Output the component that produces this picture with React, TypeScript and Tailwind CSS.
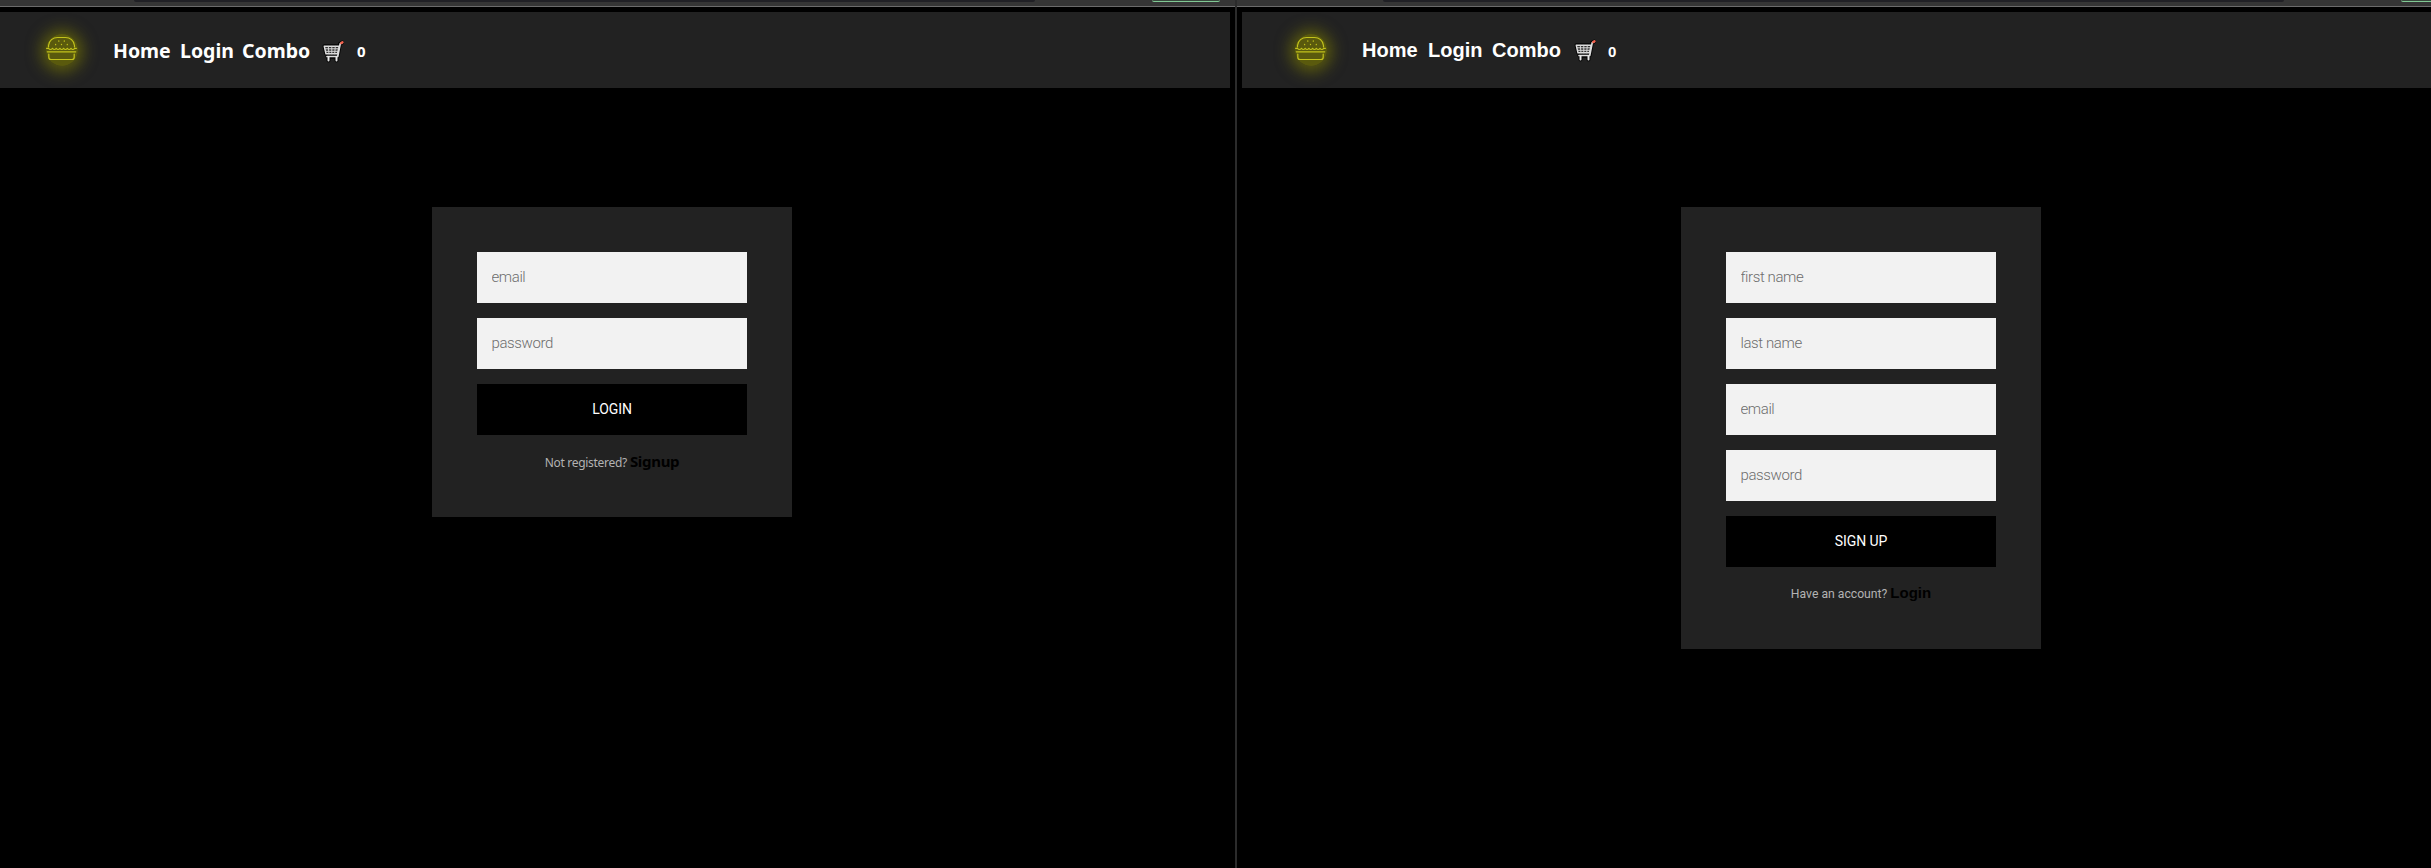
import React from "react";

function Burger() {
  return (
    <svg width="32" height="26" viewBox="0 0 32 26" fill="none" stroke="#c2c21c" strokeWidth="1.2" strokeLinecap="round" strokeLinejoin="round">
      <path d="M2.500 11V9.500C3 4.500 7 1.500 11.500 1.500h8c4.500 0 8.500 3 9 8V11" />
      <path d="M.6 12.300h1.900q2 2.400 4 0q1.850 2.400 3.700 0q1.850 2.400 3.700 0q1.850 2.400 3.700 0q1.850 2.400 3.700 0q1.850 2.400 3.700 0q1.850 2.400 3.700 0h1.700" />
      <path d="M1.300 15.800h28.400" strokeWidth="1.300" />
      <path d="M2.800 18v3.200c0 1.600.8 2.300 2.300 2.300h20.800c1.500 0 2.300-.7 2.300-2.300V18" />
      <path d="M12.800 5v.2M18.300 5v.2M9.600 8.500v.2M15.500 8.300v.2M21.300 8.500v.2" strokeWidth="1.300" />
    </svg>
  );
}

function Cart() {
  return (
    <svg width="24" height="24" viewBox="0 0 24 24" fill="none" strokeLinecap="round" strokeLinejoin="round">
      <g stroke="#050505" strokeWidth="4">
        <path d="M2.500 7.300h14.500l-1.500 7.400H4.300zM20 3.700l-2 1-2.500 13H5.500M6.500 18v3.500M14.500 18v3.500" />
      </g>
      <path d="M2.300 7.300h14.900l-1.700 7.500H4z" fill="#333333" stroke="#dedede" strokeWidth="1.500" />
      <path d="M3 9.800h13.500M3.700 12.300h12.300M6.300 7.300l.7 7.500M9.800 7.300v7.500M13.300 7.300l-.6 7.500" stroke="#d6d6d6" strokeWidth="1" />
      <path d="M20 3.700 18.200 4.800l-2.500 12.700H5" stroke="#dedede" strokeWidth="1.700" />
      <path d="M6.500 18v3.400M14.500 18v3.400" stroke="#e8e8e8" strokeWidth="2" />
      <path d="m19.300 4.100 1.200-.8" stroke="#f2604c" strokeWidth="2.400" />
    </svg>
  );
}

function Nav({ alt }: { alt?: boolean }) {
  const link = alt ? "font-['Liberation_Sans'] text-[20px]" : "font-['Noto_Sans'] text-[19.500px]";
  return (
    <nav className={`flex h-[76px] items-center bg-[#222222] text-white ${alt ? "pl-[53px]" : "pl-[46px]"}`}>
      <div className="flex h-8 w-8 items-center justify-center rounded-full bg-[#808000]/60 shadow-[0_1px_15px_5px_rgba(128,128,0,0.62)]">
        <div className="-mt-[3px]">
          <Burger />
        </div>
      </div>
      <div className={`ml-[35px] flex items-center font-bold leading-none ${alt ? "pb-[1px]" : "pt-[2px]"}`}>
        <a className={`${alt ? "w-[66px]" : "w-[67px]"} ${link}`}>Home</a>
        <a className={`${alt ? "w-[64px]" : "w-[62px]"} ${link}`}>Login</a>
        <a className={`${alt ? "w-[82px]" : "w-[80px]"} ${link}`}>Combo</a>
        <Cart />
        <span className={`text-[15px] ${alt ? "ml-[10px] pt-[3px] font-['Liberation_Sans']" : "ml-[11px] pt-[1px] font-['Noto_Sans']"}`}>0</span>
      </div>
    </nav>
  );
}

function BrowserEdge() {
  return (
    <div className="flex h-[7px] shrink-0 items-start border-b border-[#6b6b6b] bg-[#353535] pl-[134px]">
      <div className="h-[2px] w-[901px] shrink-0 rounded-b-[10px] bg-[#202025]" />
      <div className="ml-[117px] h-[2px] w-[68px] shrink-0 rounded-b-[2px] border-b border-[#81c995] bg-[#37483c]" />
    </div>
  );
}

function AuthForm({ fields, action, note, link, alt }: { fields: string[]; action: string; note: string; link: string; alt?: boolean }) {
  return (
    <form className={`mt-[119px] flex w-[360px] flex-col gap-[15px] bg-[#222222] px-[45px] pt-[45px] ${alt ? "ml-[439px] h-[442px]" : "ml-[432px] h-[310px]"}`}>
      {fields.map((f) => (
        <input
          key={f}
          placeholder={f}
          className="h-[51px] w-full bg-[#f2f2f2] px-[14.500px] pb-[2px] font-['Roboto'] text-[15px] font-light tracking-[-0.400px] placeholder:text-[#6d6d6d]"
        />
      ))}
      <button type="button" className="h-[51px] w-full bg-black pb-px font-['Roboto'] text-[14px] tracking-[-0.100px] text-white">
        {action}
      </button>
      <p className={`-mt-[1px] flex items-baseline justify-center gap-[3px] leading-6 ${alt ? "font-['Roboto']" : "font-['Noto_Sans']"}`}>
        <span className={`text-[#b3b3b3] ${alt ? "text-[12.200px]" : "text-[12px] tracking-[-0.300px]"}`}>{note}</span>
        <a className={`font-bold text-black ${alt ? "font-['Liberation_Sans'] text-[15px]" : "text-[15px] tracking-[-0.300px]"}`}>{link}</a>
      </p>
    </form>
  );
}

export default function App() {
  return (
    <div className="flex h-[868px] w-[2431px] overflow-hidden bg-black">
      <section className="flex w-[1235px] shrink-0 flex-col overflow-hidden">
        <BrowserEdge />
        <div className="pr-[5px] pt-[5px]">
          <Nav />
        </div>
        <AuthForm fields={["email", "password"]} action="LOGIN" note="Not registered?" link="Signup" />
      </section>
      <div className="w-[2px] shrink-0 bg-[#2b2b2b]" />
      <section className="flex w-[1194px] shrink-0 flex-col overflow-hidden">
        <div className="flex bg-[#353535]">
          <div className="w-[12px] shrink-0 border-b border-[#6b6b6b]" />
          <div className="flex-1">
            <BrowserEdge />
          </div>
        </div>
        <div className="pl-[5px] pt-[5px]">
          <Nav alt />
        </div>
        <div className="pl-[5px]">
          <AuthForm alt fields={["first name", "last name", "email", "password"]} action="SIGN UP" note="Have an account?" link="Login" />
        </div>
      </section>
    </div>
  );
}
